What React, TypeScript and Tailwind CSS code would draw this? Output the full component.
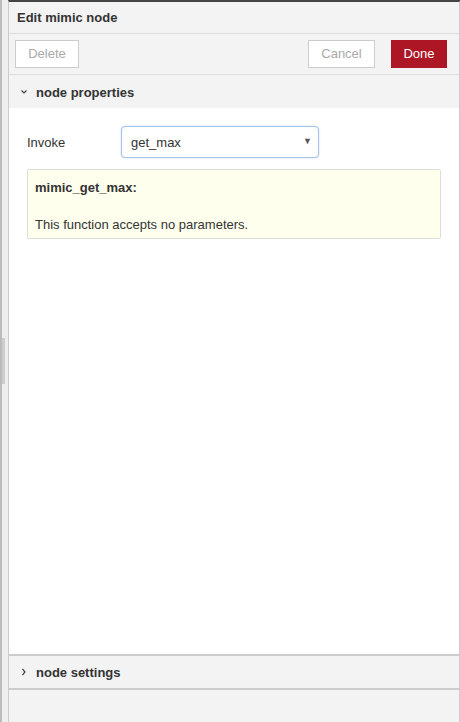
import React, { useState } from 'react';

const Chevron = ({ open }: { open: boolean }) => (
  <svg width="8" height="8" viewBox="0 0 8 8" className="shrink-0">
    {open ? (
      <path d="M1.5 2.5 L4 5 L6.5 2.5" fill="none" stroke="#444" strokeWidth="1.2" />
    ) : (
      <path d="M2.5 1 L5 4 L2.5 7" fill="none" stroke="#444" strokeWidth="1.2" />
    )}
  </svg>
);

const App = () => {
  const [method, setMethod] = useState('get_max');

  return (
    <div
      className="flex h-[722px] w-[460px] overflow-hidden bg-[#f3f3f3] text-[13px] text-[#333]"
      style={{ fontFamily: '"Liberation Sans", Arial, sans-serif' }}
    >
      {/* left gutter */}
      <div className="flex w-[8px] shrink-0 border-l-2 border-[#bbb] bg-[#eee] pt-[338px]">
        <div className="h-[46px] w-[3px] bg-[#ccc]" />
      </div>

      {/* tray */}
      <div className="flex flex-1 flex-col border-l border-t-2 border-r-2 border-l-[#ccc] border-r-[#ccc] border-t-[#444]">
        <div className="flex h-[32px] items-center border-b border-[#ddd] px-[8px] font-bold">
          Edit mimic node
        </div>

        <div className="flex h-[41px] items-center justify-between border-b border-[#ddd] pl-[6px] pr-[12px]">
          <button className="h-[28px] w-[64px] border border-[#ccc] bg-white text-[#aaa]">Delete</button>
          <div className="flex items-center gap-[16px]">
            <button className="h-[28px] w-[67px] border border-[#ccc] bg-white text-[#aaa]">Cancel</button>
            <button className="h-[28px] w-[56px] bg-[#ad1625] text-white">Done</button>
          </div>
        </div>

        <div className="flex h-[33px] items-center gap-[8px] pl-[11px] font-bold">
          <Chevron open />
          <span className="pt-[2px]">node properties</span>
        </div>

        <div className="flex-1 bg-white px-[18px] pt-[18px]">
          <div className="flex items-center">
            <label className="w-[94px] pt-[2px]">Invoke</label>
            <div className="relative">
              <select
                value={method}
                onChange={(e) => setMethod(e.target.value)}
                className="h-[32px] w-[198px] appearance-none rounded-[4px] border border-[#a6c4e8] bg-white pl-[9px] pr-6 pt-[2px] text-[13px] text-[#333] shadow-[0_0_2px_#bcd3ee] outline-none"
              >
                <option value="get_max">get_max</option>
                <option value="get_min">get_min</option>
              </select>
              <span className="pointer-events-none absolute right-[7px] top-[9px] text-[9px] text-[#555]">▼</span>
            </div>
          </div>

          <div className="mt-[11px] h-[70px] w-[414px] rounded-[2px] border border-[#ddd] bg-[#ffffee] px-[7px] pt-[8px]">
            <div className="font-bold">mimic_get_max:</div>
            <div className="mt-[17px]">This function accepts no parameters.</div>
          </div>
        </div>

        <div className="flex h-[36px] items-center gap-[8px] border-y-2 border-[#ccc] pl-[11px] font-bold">
          <Chevron open={false} />
          <span className="pt-[1px]">node settings</span>
        </div>

        <div className="h-[32px]" />
      </div>
    </div>
  );
};

export default App;
